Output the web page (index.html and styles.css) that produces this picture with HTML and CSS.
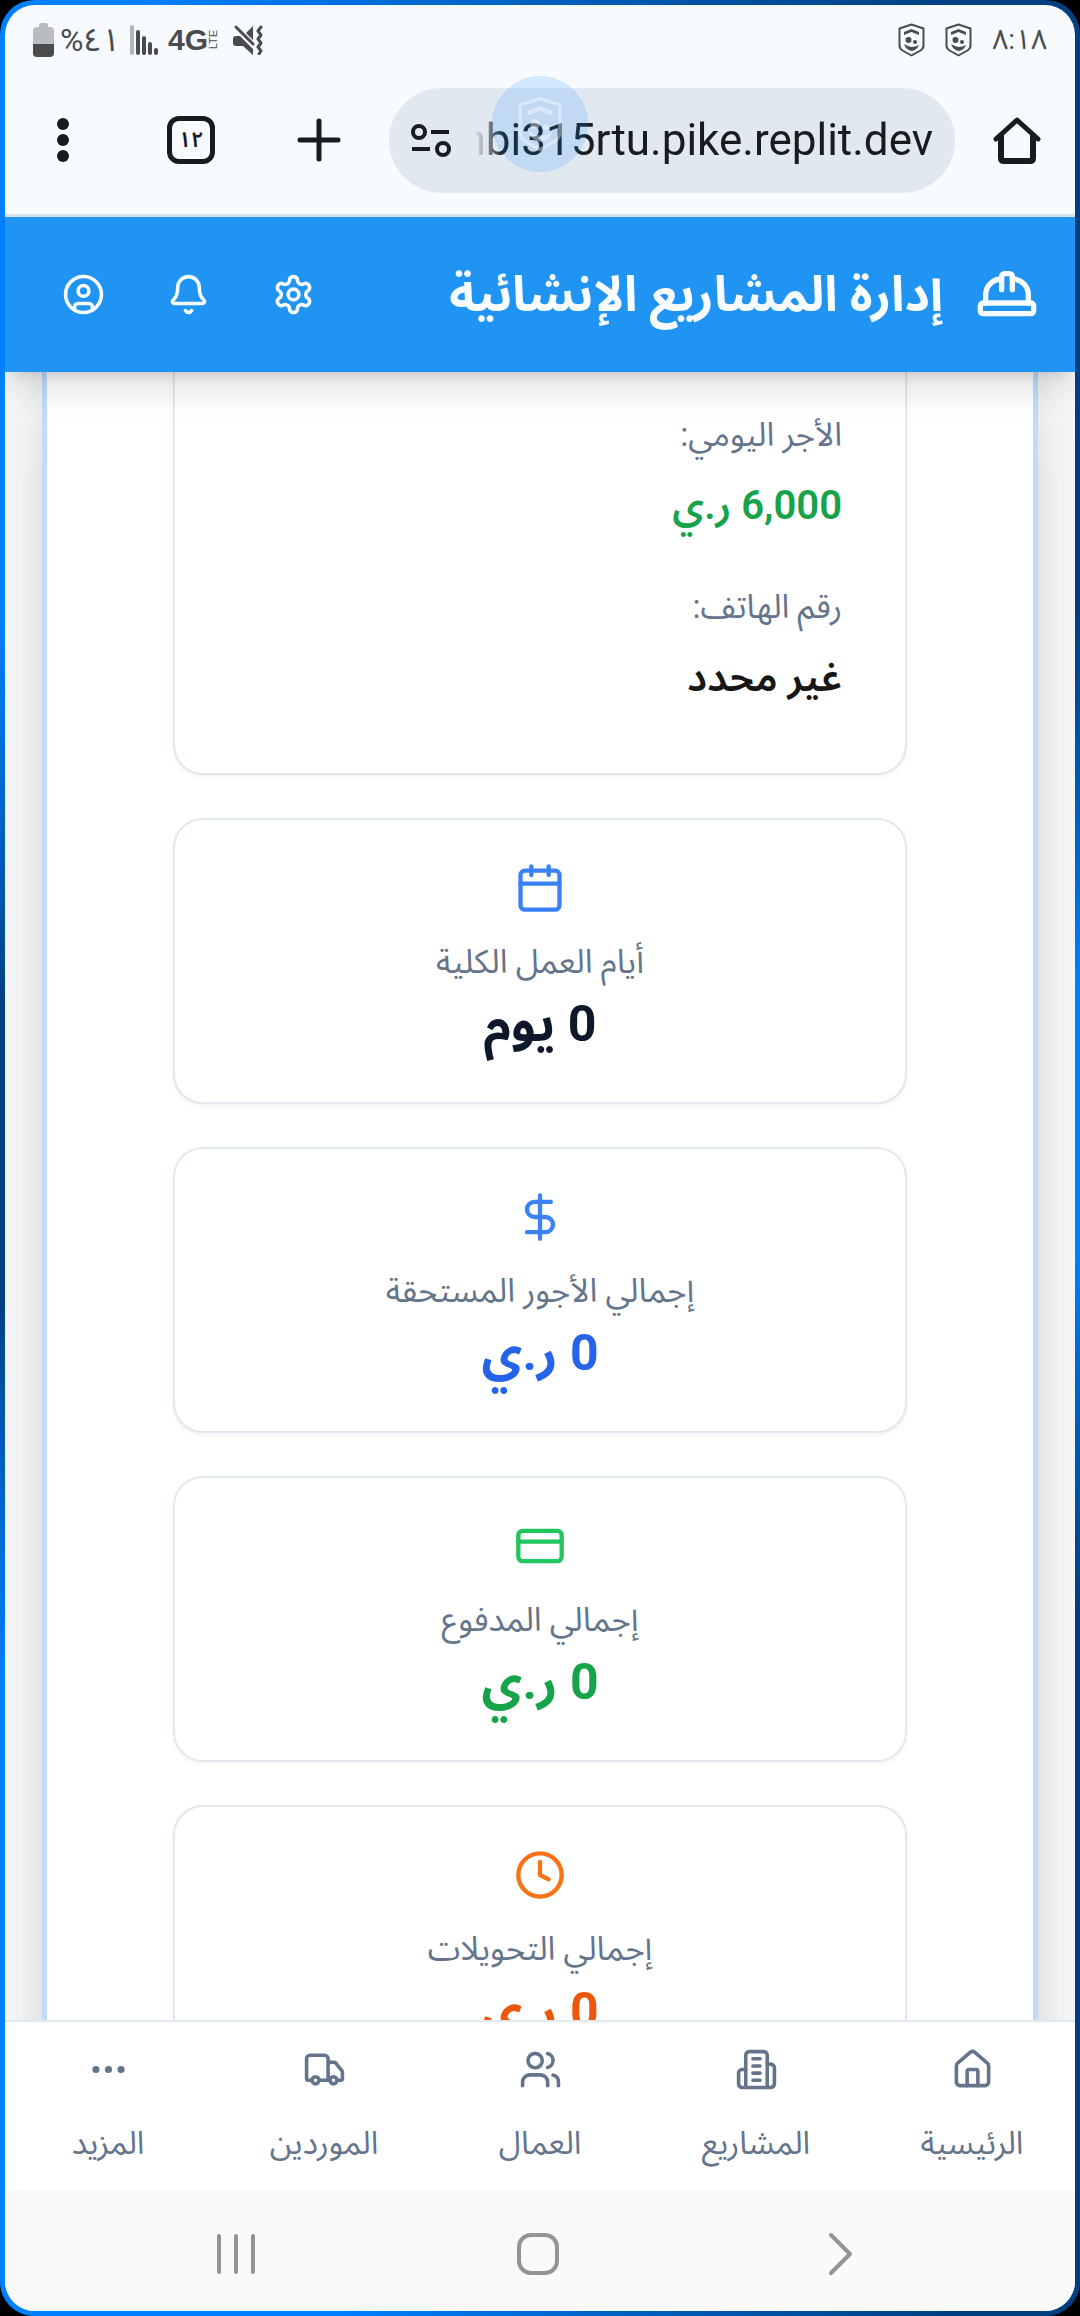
FILE: index.html
```html
<!DOCTYPE html>
<html lang="ar" dir="rtl">
<head>
<meta charset="utf-8">
<meta name="viewport" content="width=device-width, initial-scale=1">
<title>إدارة المشاريع الإنشائية</title>
<link rel="stylesheet" href="styles.css">
</head>
<body>
<div class="frame">
<div class="screen">

  <div class="status" dir="ltr">
    <div class="status-group">
      <svg class="battery" width="21" height="34" viewBox="0 0 21 34"><path d="M6 2q0-2 2-2h5q2 0 2 2v2h2q4 0 4 4v13H0V8q0-4 4-4h2z" fill="#b9bdc1"/><path d="M0 21h21v9q0 4-4 4H4q-4 0-4-4z" fill="#4a4b4d"/></svg>
      <span class="status-text">%٤١</span>
      <svg class="signal" width="28" height="30" viewBox="0 0 28 30" stroke-width="4" stroke-linecap="round"><path d="M2 2v26" stroke="#b3b6b9"/><path d="M8 7v21M14 13v15M20 19v9M26 25v3" stroke="#4a4b4d"/></svg>
      <span class="network"><b>4G</b><small>LTE</small></span>
      <svg class="mute" width="30" height="30" viewBox="0 0 30 30"><path d="M0 14q0-3 3-3h4l13 13v6L10 21H3q-3 0-3-3zM20 1v14l-7-7z" fill="#4a4b4d"/><path d="M3 2l17 17M28 2l-3 4 3 4-3 4 3 4-3 4 3 4-2 3" fill="none" stroke="#4a4b4d" stroke-width="3" stroke-linecap="round" stroke-linejoin="round"/></svg>
    </div>
    <div class="status-group status-end">
      <svg width="27" height="34" viewBox="0 0 27 34"><use href="#shield"/></svg>
      <svg width="27" height="34" viewBox="0 0 27 34"><use href="#shield"/></svg>
      <span class="clock">٨:١٨</span>
    </div>
  </div>

  <div class="browser" dir="ltr">
    <button class="tool" aria-label="القائمة"><svg width="48" height="48" viewBox="0 0 48 48" fill="#191c1f"><circle cx="24" cy="8" r="6"/><circle cx="24" cy="24" r="6"/><circle cx="24" cy="40" r="6"/></svg></button>
    <button class="tool tool-wide" aria-label="علامات التبويب"><span class="tabs">١٢</span></button>
    <button class="tool" aria-label="علامة تبويب جديدة"><svg width="48" height="48" viewBox="0 0 48 48" fill="none" stroke="#191c1f" stroke-width="5" stroke-linecap="round"><path d="M24 5v38M5 24h38"/></svg></button>
    <label class="address">
      <svg class="tune" width="40" height="36" viewBox="0 0 40 36" fill="none" stroke="#191c1f" stroke-width="4"><circle cx="8" cy="10" r="6"/><path d="M20 10h18M1 27h18"/><circle cx="32" cy="27" r="6"/></svg>
      <input class="url" type="text" value="nbi315rtu.pike.replit.dev" aria-label="العنوان" readonly>
      <span class="bubble"><svg width="46" height="56" viewBox="0 0 27 34"><use href="#shield"/></svg></span>
    </label>
    <button class="tool" aria-label="الصفحة الرئيسية"><svg width="48" height="48" viewBox="0 0 48 48" fill="none" stroke="#191c1f" stroke-width="6" stroke-linecap="round" stroke-linejoin="round"><path d="M3 23L24 4l21 19" stroke-width="5"/><path d="M8 20v22q0 3 3 3h26q3 0 3-3V20"/></svg></button>
  </div>

  <header class="appbar">
    <svg class="icon logo" viewBox="0 0 24 24"><path d="M10 10V5a1 1 0 0 1 1-1h2a1 1 0 0 1 1 1v5"/><path d="M14 6a6 6 0 0 1 6 6v3"/><path d="M4 15v-3a6 6 0 0 1 6-6"/><rect x="2" y="15" width="20" height="4" rx="1"/></svg>
    <h1>إدارة المشاريع الإنشائية</h1>
    <div class="actions">
      <button aria-label="الإعدادات"><svg class="icon small" viewBox="0 0 24 24"><path d="M12.22 2h-.44a2 2 0 0 0-2 2v.18a2 2 0 0 1-1 1.73l-.43.25a2 2 0 0 1-2 0l-.15-.08a2 2 0 0 0-2.73.73l-.22.38a2 2 0 0 0 .73 2.73l.15.1a2 2 0 0 1 1 1.72v.51a2 2 0 0 1-1 1.74l-.15.09a2 2 0 0 0-.73 2.73l.22.38a2 2 0 0 0 2.73.73l.15-.08a2 2 0 0 1 2 0l.43.25a2 2 0 0 1 1 1.73V20a2 2 0 0 0 2 2h.44a2 2 0 0 0 2-2v-.18a2 2 0 0 1 1-1.73l.43-.25a2 2 0 0 1 2 0l.15.08a2 2 0 0 0 2.73-.73l.22-.39a2 2 0 0 0-.73-2.73l-.15-.08a2 2 0 0 1-1-1.74v-.5a2 2 0 0 1 1-1.74l.15-.09a2 2 0 0 0 .73-2.73l-.22-.38a2 2 0 0 0-2.73-.73l-.15.08a2 2 0 0 1-2 0l-.43-.25a2 2 0 0 1-1-1.73V4a2 2 0 0 0-2-2z"/><circle cx="12" cy="12" r="3"/></svg></button>
      <button aria-label="الإشعارات"><svg class="icon small" viewBox="0 0 24 24"><path d="M10.27 21a2 2 0 0 0 3.46 0"/><path d="M3.26 15.33A1 1 0 0 0 4 17h16a1 1 0 0 0 .74-1.67C19.41 13.96 18 12.5 18 8A6 6 0 0 0 6 8c0 4.5-1.41 5.96-2.74 7.33"/></svg></button>
      <button aria-label="الحساب"><svg class="icon small" viewBox="0 0 24 24"><circle cx="12" cy="12" r="10"/><circle cx="12" cy="10" r="3"/><path d="M7 20.66V19a2 2 0 0 1 2-2h6a2 2 0 0 1 2 2v1.66"/></svg></button>
    </div>
  </header>

  <main class="content">
    <section class="panel">
      <dl class="card details">
        <div><dt>الأجر اليومي:</dt><dd class="green">6,000 ر.ي</dd></div>
        <div><dt>رقم الهاتف:</dt><dd>غير محدد</dd></div>
      </dl>
      <article class="card stat">
        <svg class="icon blue-icon" viewBox="0 0 24 24"><path d="M8 2v4M16 2v4"/><rect x="3" y="4" width="18" height="18" rx="2"/><path d="M3 10h18"/></svg>
        <p class="label">أيام العمل الكلية</p>
        <p class="value">0 يوم</p>
      </article>
      <article class="card stat">
        <svg class="icon blue-icon" viewBox="0 0 24 24"><path d="M12 2v20M17 5H9.500a3.500 3.500 0 0 0 0 7h5a3.500 3.500 0 0 1 0 7H6"/></svg>
        <p class="label">إجمالي الأجور المستحقة</p>
        <p class="value blue">0 ر.ي</p>
      </article>
      <article class="card stat">
        <svg class="icon green-icon" viewBox="0 0 24 24"><rect x="2" y="5" width="20" height="14" rx="2"/><path d="M2 10h20"/></svg>
        <p class="label">إجمالي المدفوع</p>
        <p class="value green">0 ر.ي</p>
      </article>
      <article class="card stat">
        <svg class="icon orange-icon" viewBox="0 0 24 24"><circle cx="12" cy="12" r="10"/><path d="M12 6v6l4 2"/></svg>
        <p class="label">إجمالي التحويلات</p>
        <p class="value orange">0 ر.ي</p>
      </article>
    </section>
  </main>

  <nav class="tabbar">
    <a href="#home"><svg class="icon small" viewBox="0 0 24 24"><path d="M15 21v-8a1 1 0 0 0-1-1h-4a1 1 0 0 0-1 1v8"/><path d="M3 10a2 2 0 0 1 .71-1.530l7-6a2 2 0 0 1 2.580 0l7 6A2 2 0 0 1 21 10v9a2 2 0 0 1-2 2H5a2 2 0 0 1-2-2z"/></svg><span>الرئيسية</span></a>
    <a href="#projects"><svg class="icon small" viewBox="0 0 24 24"><path d="M6 22V4a2 2 0 0 1 2-2h8a2 2 0 0 1 2 2v18Z"/><path d="M6 12H4a2 2 0 0 0-2 2v6a2 2 0 0 0 2 2h2M18 9h2a2 2 0 0 1 2 2v9a2 2 0 0 1-2 2h-2M10 6h4M10 10h4M10 14h4M10 18h4"/></svg><span>المشاريع</span></a>
    <a href="#workers"><svg class="icon small" viewBox="0 0 24 24"><path d="M16 21v-2a4 4 0 0 0-4-4H6a4 4 0 0 0-4 4v2"/><circle cx="9" cy="7" r="4"/><path d="M22 21v-2a4 4 0 0 0-3-3.870M16 3.130a4 4 0 0 1 0 7.750"/></svg><span>العمال</span></a>
    <a href="#suppliers"><svg class="icon small" viewBox="0 0 24 24"><path d="M14 18V6a2 2 0 0 0-2-2H4a2 2 0 0 0-2 2v11a1 1 0 0 0 1 1h2M15 18H9M19 18h2a1 1 0 0 0 1-1v-3.650a1 1 0 0 0-.22-.62l-3.480-4.350A1 1 0 0 0 17.520 8H14"/><circle cx="17" cy="18" r="2"/><circle cx="7" cy="18" r="2"/></svg><span>الموردين</span></a>
    <a href="#more"><svg class="icon small" viewBox="0 0 24 24"><circle cx="12" cy="12" r="1"/><circle cx="19" cy="12" r="1"/><circle cx="5" cy="12" r="1"/></svg><span>المزيد</span></a>
  </nav>

  <div class="system" dir="ltr">
    <button aria-label="التطبيقات الأخيرة"><svg width="44" height="44" viewBox="0 0 44 44"><path d="M5 4v36M22 4v36M39 4v36"/></svg></button>
    <button aria-label="الشاشة الرئيسية"><svg width="44" height="44" viewBox="0 0 44 44"><rect x="3" y="3" width="38" height="38" rx="12"/></svg></button>
    <button aria-label="رجوع"><svg width="44" height="44" viewBox="0 0 44 44"><path d="M13 3l19 19-19 19"/></svg></button>
  </div>

</div>
</div>

<svg class="defs" width="0" height="0">
  <symbol id="shield" viewBox="0 0 27 34">
    <path d="M13.500 1.500L25.500 5.500v17q0 3-3 5l-9 5-9-5q-3-2-3-5v-17z" fill="none" stroke="currentColor" stroke-width="2" stroke-linejoin="round"/>
    <path d="M6 9l7.500-3L21 9v3l-7.500-3L6 12z" fill="currentColor"/>
    <circle cx="10.500" cy="17" r="3" fill="currentColor"/><circle cx="17" cy="19" r="2" fill="currentColor"/>
    <path d="M6 21q5 3 8 3t7-2q-2 5-7 6-6-1-8-7z" fill="currentColor"/>
  </symbol>
</svg>
</body>
</html>
```
FILE: styles.css
```css
* { box-sizing: border-box; }

body {
  margin: 0;
  background: #000;
  color: #0f172a;
  font-family: Roboto, "Noto Sans Arabic", "Noto Naskh Arabic", "DejaVu Sans", sans-serif;
}

h1, p, dl, dd { margin: 0; }
button { padding: 0; border: 0; background: none; color: inherit; font: inherit; }
svg { display: block; flex: none; }
.defs { position: absolute; }

.frame {
  height: 100vh;
  padding: 5px;
  border-radius: 34px;
  background: conic-gradient(#0060c0 0deg, #003f80 20deg, #003f80 44deg, #0080ff 72deg, #0080ff 100deg, #003f80 130deg, #003f80 160deg, #0080ff 190deg, #0080ff 225deg, #003f80 255deg, #003f80 286deg, #0080ff 316deg, #0080ff 340deg, #0060c0 360deg);
}

.screen {
  display: flex;
  flex-direction: column;
  height: 100%;
  overflow: hidden;
  border-radius: 30px;
  background: #f7faff;
}

/* phone status bar */
.status {
  display: flex;
  flex: none;
  justify-content: space-between;
  height: 69px;
  padding: 0 28px;
  color: #4a4b4d;
}
.status-group { display: flex; align-items: center; }
.status-end { gap: 20px; }
.status-text { font-size: 32px; line-height: 40px; }
.clock { font-size: 28px; line-height: 40px; }
.battery { margin-right: 6px; }
.signal { margin: 0 10px; }
.network { display: flex; align-items: center; font-family: "Liberation Sans", sans-serif; }
.network b { font-size: 30px; line-height: 30px; }
.network small { writing-mode: sideways-lr; font-size: 11px; line-height: 11px; }
.mute { margin-left: 14px; }

/* browser toolbar */
.browser {
  display: flex;
  flex: none;
  align-items: center;
  height: 143px;
  padding: 0 4px 8px;
  border-bottom: 3px solid #d5e3ec;
  color: #191c1f;
}
.tool { display: grid; flex: none; place-items: center; width: 108px; height: 104px; }
.tool-wide { width: 148px; }
.tabs {
  display: grid;
  place-items: center;
  width: 48px;
  height: 48px;
  border: 5px solid #191c1f;
  border-radius: 12px;
  font-size: 22px;
  font-weight: 600;
  line-height: 30px;
}
.address {
  position: relative;
  display: flex;
  flex: 1;
  align-items: center;
  min-width: 0;
  height: 105px;
  margin: 0 8px 0 16px;
  padding: 0 22px;
  border-radius: 53px;
  background: #e2e8f0;
}
.url {
  flex: 1;
  min-width: 0;
  height: 64px;
  margin-left: 8px;
  padding: 0;
  border: 0;
  background: none;
  color: #191c1f;
  font: 44px/64px Roboto, sans-serif;
  text-align: right;
  -webkit-mask-image: linear-gradient(to right, transparent 16px, #000 44px);
  mask-image: linear-gradient(to right, transparent 16px, #000 44px);
}
.bubble {
  position: absolute;
  left: 103px;
  top: -12px;
  display: grid;
  place-items: center;
  width: 96px;
  height: 96px;
  border-radius: 50%;
  background: rgb(30 144 255 / 17%);
  color: rgb(255 255 255 / 40%);
}

/* application header */
.icon {
  width: 52px;
  height: 52px;
  fill: none;
  stroke: currentColor;
  stroke-width: 2;
  stroke-linecap: round;
  stroke-linejoin: round;
}
.icon.small { width: 43px; height: 43px; }
.icon.logo { width: 64px; height: 64px; }

.appbar {
  position: relative;
  z-index: 1;
  display: flex;
  flex: none;
  align-items: center;
  height: 155px;
  padding: 0 36px;
  background: #2094f3;
  color: #f8fbff;
  box-shadow: 0 22px 33px -7px rgb(0 0 0 / 14%), 0 9px 13px -9px rgb(0 0 0 / 14%);
}
.appbar h1 { margin-right: 32px; font-size: 49px; font-weight: 700; line-height: 60px; white-space: nowrap; }
.actions { display: flex; margin-right: auto; margin-left: -10px; }
.actions button { display: grid; place-items: center; width: 105px; height: 88px; }

/* page content */
.content {
  flex: 1;
  min-height: 0;
  overflow: hidden;
  padding: 0 37px;
  background: #f5f6f8;
}
.panel {
  display: flex;
  flex-direction: column;
  gap: 43px;
  padding: 0 126px;
  border: solid #bfdbfe;
  border-width: 0 5px;
  background: #fff;
  box-shadow: 0 43px 54px -11px rgb(0 0 0 / 12%), 0 0 36px rgb(0 0 0 / 6%);
}
.card {
  border: 2px solid #e2e8f0;
  border-radius: 30px;
  background: #fff;
  box-shadow: 0 2px 4px rgb(0 0 0 / 5%);
}
.details {
  display: flex;
  flex-direction: column;
  gap: 46px;
  padding: 39px 63px 64px;
  border-top: 0;
  border-radius: 0 0 30px 30px;
}
dt { color: #64748b; font-size: 33px; line-height: 48px; }
dd { margin-top: 16px; color: #171717; font-size: 40px; font-weight: 600; line-height: 62px; }
.stat { display: flex; flex-direction: column; align-items: center; padding: 42px 40px 39px; }
.label { margin-top: 24px; color: #64748b; font-size: 33px; line-height: 48px; }
.value { font-size: 50px; font-weight: 700; line-height: 77px; }
.blue { color: #2563eb; }
.green { color: #16a34a; }
.orange { color: #ea580c; }
.blue-icon { color: #3b82f6; }
.green-icon { color: #22c55e; }
.orange-icon { color: #f97316; }

/* bottom navigation */
.tabbar {
  position: relative;
  display: flex;
  flex: none;
  height: 170px;
  margin: 0 -5px;
  padding: 26px 0 0;
  border-top: 2px solid #e2e8f0;
  background: #fff;
}
.tabbar a {
  display: flex;
  flex: 1;
  flex-direction: column;
  align-items: center;
  gap: 30px;
  color: #64748b;
  font-size: 32px;
  line-height: 44px;
  text-decoration: none;
}
.system {
  display: flex;
  flex: none;
  justify-content: center;
  gap: 258px;
  height: 121px;
  padding: 6px 5px 0 0;
  background: #fafafa;
}
.system button { display: grid; place-items: center; }
.system svg { fill: none; stroke: #949494; stroke-width: 4; stroke-linecap: round; stroke-linejoin: round; }
```
